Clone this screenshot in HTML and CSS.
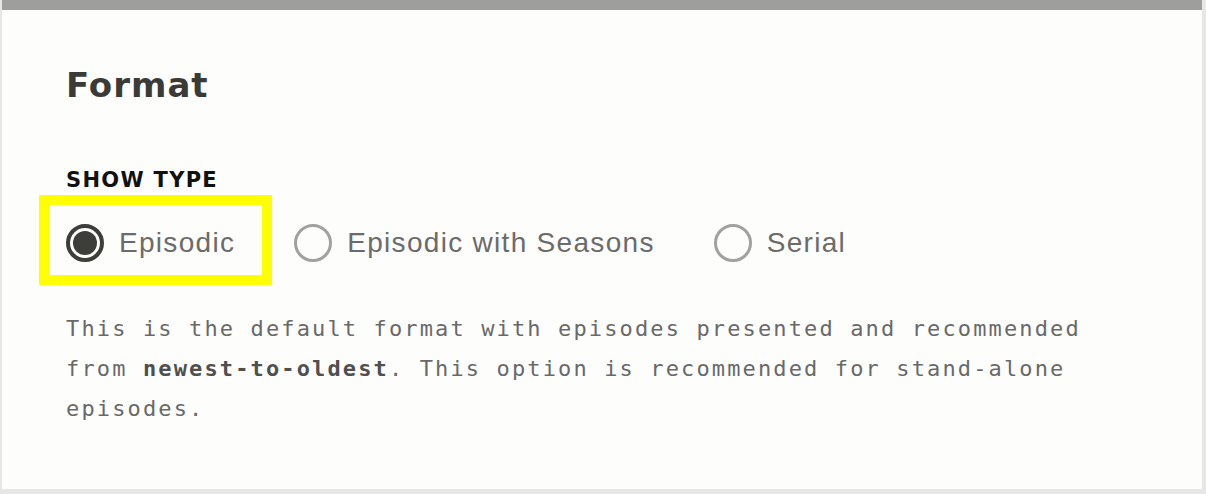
FILE: index.html
```html
<!DOCTYPE html>
<html>
<head>
<meta charset="utf-8">
<link rel="stylesheet" href="styles.css">
</head>
<body>
<section class="card">
  <h2 class="title">Format</h2>
  <div class="field">
    <div class="field-label">SHOW TYPE</div>
    <div class="options">
      <label class="option highlight">
        <span class="radio checked"><span class="dot"></span></span>
        <span class="option-text">Episodic</span>
      </label>
      <label class="option">
        <span class="radio"></span>
        <span class="option-text">Episodic with Seasons</span>
      </label>
      <label class="option">
        <span class="radio"></span>
        <span class="option-text">Serial</span>
      </label>
    </div>
    <p class="desc">This is the default format with episodes presented and recommended from <strong>newest-to-oldest</strong>. This option is recommended for stand-alone episodes.</p>
  </div>
</section>
</body>
</html>
```

FILE: styles.css
```css
html, body {
  margin: 0;
  padding: 0;
}
body {
  background: #e7e7e5;
  width: 1206px;
  height: 494px;
  overflow: hidden;
}
.card {
  margin-left: 2px;
  width: 1200px;
  height: 489px;
  box-sizing: border-box;
  background: #fdfdfc;
  border-top: 10px solid #9e9e9c;
  padding: 55px 64px 0 64px;
}
.title {
  margin: 0;
  font-family: "DejaVu Sans", sans-serif;
  font-weight: bold;
  font-size: 34px;
  line-height: 40px;
  letter-spacing: 1px;
  color: #3a3a37;
}
.field {
  margin-top: 63px;
}
.field-label {
  font-family: "DejaVu Sans", sans-serif;
  font-weight: bold;
  font-size: 21px;
  line-height: 24px;
  letter-spacing: 1.3px;
  color: #111;
}
.options {
  display: flex;
  align-items: center;
  gap: 59px;
  margin-top: 32px;
  height: 38px;
}
.option {
  display: flex;
  align-items: center;
  gap: 15px;
}
.option.highlight {
  position: relative;
}
.option.highlight::after {
  content: "";
  position: absolute;
  left: -27px;
  right: -37px;
  top: -29px;
  bottom: -23px;
  border: 10px solid #ffff00;
}
.radio {
  width: 38px;
  height: 38px;
  box-sizing: border-box;
  border: 3px solid #a1a1a0;
  border-radius: 50%;
  display: flex;
  align-items: center;
  justify-content: center;
  flex: none;
}
.radio.checked {
  border: 4px solid #3d3d3a;
}
.dot {
  width: 24px;
  height: 24px;
  border-radius: 50%;
  background: #3d3d3a;
}
.option-text {
  font-family: "Liberation Sans", Arial, sans-serif;
  font-size: 28px;
  line-height: 38px;
  letter-spacing: 1.3px;
  color: #6b6b6b;
}
.desc {
  margin: 47px 0 0 0;
  font-family: "DejaVu Sans Mono", monospace;
  font-size: 22px;
  line-height: 40px;
  letter-spacing: 2.13px;
  color: #696969;
  width: 1040px;
}
.desc strong {
  color: #4f4f4f;
  font-weight: bold;
}
```
